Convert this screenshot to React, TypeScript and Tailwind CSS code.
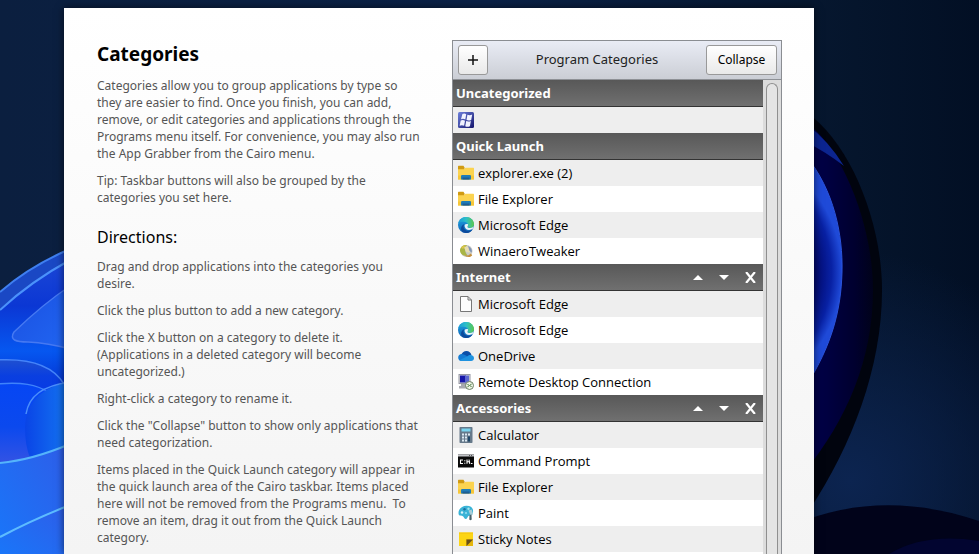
import type { ReactNode } from "react";

type IconName =
  | "windows"
  | "folder"
  | "edge"
  | "winaero"
  | "file"
  | "onedrive"
  | "remote"
  | "calculator"
  | "cmd"
  | "paint"
  | "sticky";

interface Category {
  name: string;
  editable: boolean;
  apps: { name: string; icon: IconName }[];
}

const categories: Category[] = [
  {
    name: "Uncategorized",
    editable: false,
    apps: [{ name: "", icon: "windows" }],
  },
  {
    name: "Quick Launch",
    editable: false,
    apps: [
      { name: "explorer.exe (2)", icon: "folder" },
      { name: "File Explorer", icon: "folder" },
      { name: "Microsoft Edge", icon: "edge" },
      { name: "WinaeroTweaker", icon: "winaero" },
    ],
  },
  {
    name: "Internet",
    editable: true,
    apps: [
      { name: "Microsoft Edge", icon: "file" },
      { name: "Microsoft Edge", icon: "edge" },
      { name: "OneDrive", icon: "onedrive" },
      { name: "Remote Desktop Connection", icon: "remote" },
    ],
  },
  {
    name: "Accessories",
    editable: true,
    apps: [
      { name: "Calculator", icon: "calculator" },
      { name: "Command Prompt", icon: "cmd" },
      { name: "File Explorer", icon: "folder" },
      { name: "Paint", icon: "paint" },
      { name: "Sticky Notes", icon: "sticky" },
    ],
  },
];

const intro = [
  "Categories allow you to group applications by type so\nthey are easier to find. Once you finish, you can add,\nremove, or edit categories and applications through the\nPrograms menu itself. For convenience, you may also run\nthe App Grabber from the Cairo menu.",
  "Tip: Taskbar buttons will also be grouped by the\ncategories you set here.",
];

const directions = [
  "Drag and drop applications into the categories you\ndesire.",
  "Click the plus button to add a new category.",
  "Click the X button on a category to delete it.\n(Applications in a deleted category will become\nuncategorized.)",
  "Right-click a category to rename it.",
  'Click the "Collapse" button to show only applications that\nneed categorization.',
  "Items placed in the Quick Launch category will appear in\nthe quick launch area of the Cairo taskbar. Items placed\nhere will not be removed from the Programs menu.  To\nremove an item, drag it out from the Quick Launch\ncategory.",
];

const icons: Record<IconName, ReactNode> = {
  windows: (
    <>
      <rect width="16" height="16" rx="1.5" fill="url(#winTile)" />
      <path
        d="M4.400 2Q6.400 1 8.200 2.200L7.300 7.500Q5.200 6.300 3 7.300ZM9.400 2.700Q11.800 3.700 14.200 2.600L13.200 7.900Q10.700 8.900 8.500 8ZM2.700 8.500Q5 7.500 7 8.700L6.100 13.800Q4 12.700 1.600 13.700ZM8.200 9.100Q10.400 10.100 12.900 9L11.900 14.200Q9.500 15.200 7.200 14.200Z"
        fill="#f1f3ff"
      />
    </>
  ),
  folder: (
    <>
      <path d="M0 1.300Q0 .700 .600 .700H5.500L6.500 2.600V5H0Z" fill="#d09a12" />
      <path d="M0 4.300H6.200L7.400 2.800H15.400Q16 2.800 16 3.400V14.500H0Z" fill="#fbd350" />
      <path d="M0 10.500H16V14.500H0Z" fill="#f6c638" />
      <path d="M3 14.500V11.300Q3 10 4.300 10H11.700Q13 10 13 11.300V14.500Z" fill="#1f7cb8" />
      <path d="M4.500 12.500H11.500V14.500H4.500Z" fill="#1d5c93" />
    </>
  ),
  edge: (
    <>
      <circle cx="8" cy="8" r="8" fill="url(#edgeBlue)" />
      <path
        d="M.3 6.2C1.2 2.6 4.3 0 8.2 0 12.8 0 16 3.4 16 7.2c0 2.2-1.6 3.8-3.9 3.8-1.5 0-2.6-.5-2.6-1.2 0-.5.6-.8.6-1.9C10.100 6 8.200 4.700 5.800 4.700 3.600 4.700 1.600 5.100.300 6.200Z"
        fill="url(#edgeGreen)"
      />
      <path
        d="M6.600 7C5 8.500 5.200 11.500 7.400 13 9.600 14.500 12.600 14.100 14.800 12.200 12.700 16 8.300 16.800 5 15.300 2 13.500 2.400 8.500 6.600 7Z"
        fill="#0c4a9c"
      />
      <path
        d="M6.900 7.600C7.600 7 9 6.700 10 7.300 10.300 8.700 9.400 9.200 9.500 9.900 9.600 10.700 11 11.100 12.300 11 13.700 10.900 14.900 10.200 15.600 9.200L15.300 11.300C13.200 13.400 9.700 13.500 8 11.900 6.800 10.800 6.200 8.700 6.900 7.600Z"
        fill="#e8f3f8"
      />
    </>
  ),
  winaero: (
    <>
      <circle cx="8.500" cy="8" r="6" fill="#c8c9c4" />
      <path d="M2 7C2.500 3.500 6 1.500 9 2.200 6.500 4 6 8 9.500 12.500 5 13.500 1.800 10.500 2 7Z" fill="#a9b545" />
      <path d="M6 4.500Q9 2.500 11.500 5L12.500 9Q10 10 8 8.500Z" fill="#e8ddb0" />
      <path d="M10 3Q14.500 5 13.800 9.500L11.500 8Z" fill="#8195b8" />
      <path d="M3 4.500Q5 2 8 2L5 6Z" fill="#dcc54a" />
      <path d="M6 12Q10 13.500 13 10.500L14.200 12.500 12 14Q8 14.500 6 12Z" fill="#c58f3d" />
    </>
  ),
  file: (
    <path
      d="M2.500.500H10L13.500 4V15.500H2.500ZM10 .500V4H13.500"
      fill="#fdfdfd"
      stroke="#777"
      strokeWidth="1"
    />
  ),
  onedrive: (
    <>
      <path d="M3 8C3.500 4.800 6 3 8.500 3 11 3 13 4.700 13.500 7.200L9 10Z" fill="#0b4fa8" />
      <path d="M3.600 13A3.600 3.600 0 0 1 .200 9.500C.200 7.500 1.800 6 3.700 6 5.200 6 6.500 6.800 8 7.600L13.500 13Z" fill="#147bd3" />
      <path d="M9 8.500C10 7.200 11.500 6.700 13 7 14.800 7.300 16 8.600 16 10.200 16 11.800 14.800 13 13 13H3.500Q2 13 1.300 12.200Z" fill="#1e92df" />
    </>
  ),
  remote: (
    <>
      <rect x="1" y=".500" width="11" height="9" fill="#d8d9dd" stroke="#9698a4" />
      <rect x="2" y="1.500" width="6" height="7" fill="#1616a8" />
      <path d="M7 1.500H11V8.500H7Z" fill="#5b67cf" />
      <path d="M3 10H9V12H3ZM1 12H11V14.500H1Z" fill="#a7a9b0" />
      <circle cx="11.500" cy="11.500" r="4" fill="#edf3e6" stroke="#6c8065" />
      <path d="M9.500 10L11 11.500 9.500 13.200M13.500 9.800L12 11.500 13.500 13" fill="none" stroke="#356c2c" />
    </>
  ),
  calculator: (
    <>
      <rect x="1.500" width="13" height="16" rx=".800" fill="#66798a" />
      <rect x="3.500" y="1.500" width="9" height="3" fill="#79d4ee" />
      <path
        d="M4 6.500H6V8.500H4ZM7 6.500H9V8.500H7ZM10 6.500H12V8.500H10ZM4 9.500H6V11.500H4ZM7 9.500H9V11.500H7ZM4 12.500H6V14.500H4ZM7 12.500H9V14.500H7Z"
        fill="#dceaf3"
      />
      <path d="M10 9.500H12V14.500H10Z" fill="#1e4668" />
    </>
  ),
  cmd: (
    <>
      <rect y="1.500" width="16" height="13" fill="#0a0a0a" />
      <path d="M0 1.500H16V3.500H0Z" fill="#c3c5c9" />
      <path d="M11 2H12V3H11ZM13 2H14V3H13Z" fill="#555" />
      <path
        d="M5 7H2.500V10.500H5M6.800 7.200V8.200M6.800 9.800V10.800M9 6.500V10.800M9 8.700H11M11 6.500L11.800 10.800M13 10.500H14.500"
        fill="none"
        stroke="#fff"
        strokeWidth="1.100"
      />
    </>
  ),
  paint: (
    <>
      <path
        d="M.500 8C.500 4 4 .800 8.500 .800 13 .800 15.500 3 15 7 14.600 10 12 10 10.500 11 9 12 9.500 14 7.500 14 6 14 6.200 11.500 4.500 11 2.500 10.500.500 11 .500 8Z"
        fill="#39b3d6"
      />
      <circle cx="4" cy="7.500" r="1.200" fill="#d8f3fa" />
      <circle cx="6.500" cy="4.300" r="1.200" fill="#1b6fa3" />
      <circle cx="10.500" cy="3.800" r="1.200" fill="#a3e6ef" />
      <circle cx="8" cy="8" r="1.100" fill="#8edcf0" />
      <path d="M10.500 5.500L13.700 4.500 15 9.500 12.500 10.500Z" fill="#a8ced8" />
      <path d="M11.500 10L13.500 9.500 13.700 14.500Q12.500 16 11.300 14.500Z" fill="#48616b" />
    </>
  ),
  sticky: (
    <>
      <path d="M1 1.500H15V8L8 15H1Z" fill="#fcd514" />
      <path d="M8 8H15V15H8Z" fill="#e4b50b" />
      <path d="M8.500 8.500H15L8.500 15Z" fill="#67501d" />
      <path d="M1 1.500H15V3H1Z" fill="#f7ca10" />
    </>
  ),
};

function AppIcon({ name }: { name: IconName }) {
  return (
    <svg viewBox="0 0 16 16" className="size-4 shrink-0" aria-hidden="true">
      {icons[name]}
    </svg>
  );
}

function Wallpaper() {
  return (
    <svg
      viewBox="0 0 979 554"
      preserveAspectRatio="xMidYMid slice"
      className="absolute inset-0 size-full"
      aria-hidden="true"
    >
      <defs>
        <linearGradient id="sky" x1="0" y1="0" x2="1" y2="0">
          <stop offset="0" stopColor="#0b1f3f" />
          <stop offset=".5" stopColor="#0a2147" />
          <stop offset=".83" stopColor="#06172f" />
          <stop offset="1" stopColor="#020f24" />
        </linearGradient>
        <radialGradient id="glow" cx="850" cy="480" r="230" gradientUnits="userSpaceOnUse">
          <stop offset="0" stopColor="#0c2450" />
          <stop offset="1" stopColor="#0c2450" stopOpacity="0" />
        </radialGradient>
        <linearGradient id="petalA" x1="0" y1="0" x2="0" y2="1">
          <stop offset="0" stopColor="#1f50d0" />
          <stop offset=".4" stopColor="#0a3fe0" />
          <stop offset="1" stopColor="#0638e8" />
        </linearGradient>
        <linearGradient id="petalF" x1="0" y1="260" x2="0" y2="390" gradientUnits="userSpaceOnUse">
          <stop offset="0" stopColor="#1c47d6" />
          <stop offset=".35" stopColor="#0b37d4" />
          <stop offset=".7" stopColor="#0657f0" />
          <stop offset="1" stopColor="#0430d0" />
        </linearGradient>
        <linearGradient id="petalB" x1="0" y1="0" x2="1" y2="1">
          <stop offset="0" stopColor="#1a4fe0" />
          <stop offset="1" stopColor="#2166f2" />
        </linearGradient>
        <linearGradient id="petalC" x1="0" y1="0" x2="1" y2="0">
          <stop offset="0" stopColor="#0a44e6" />
          <stop offset="1" stopColor="#1578f2" />
        </linearGradient>
        <linearGradient id="petalD" x1="0" y1="0" x2="0" y2="1">
          <stop offset="0" stopColor="#0646f4" />
          <stop offset=".5" stopColor="#0b49ee" />
          <stop offset="1" stopColor="#3b55e2" />
        </linearGradient>
        <linearGradient id="petalE" x1="0" y1="1" x2="1" y2="0">
          <stop offset="0" stopColor="#1877fa" />
          <stop offset="1" stopColor="#2f5de8" />
        </linearGradient>
        <linearGradient id="rightPetal" x1="814" y1="0" x2="883" y2="0" gradientUnits="userSpaceOnUse">
          <stop offset="0" stopColor="#00004a" />
          <stop offset=".6" stopColor="#00002e" />
          <stop offset="1" stopColor="#01030f" />
        </linearGradient>
        <radialGradient id="rightCore" cx="712" cy="272" r="130" gradientUnits="userSpaceOnUse">
          <stop offset=".78" stopColor="#02086a" />
          <stop offset=".92" stopColor="#0821a4" />
          <stop offset="1" stopColor="#1f4ad8" />
        </radialGradient>
        <linearGradient id="winTile" x1="0" y1="0" x2="1" y2="1">
          <stop offset="0" stopColor="#6d80dc" />
          <stop offset="1" stopColor="#14146c" />
        </linearGradient>
        <linearGradient id="edgeBlue" x1="0" y1="0" x2="0" y2="1">
          <stop offset="0" stopColor="#1da2e0" />
          <stop offset="1" stopColor="#1065b8" />
        </linearGradient>
        <linearGradient id="edgeGreen" x1="0" y1="0" x2="1" y2="0">
          <stop offset="0" stopColor="#199bd8" />
          <stop offset=".5" stopColor="#2dbfc8" />
          <stop offset="1" stopColor="#5cc94b" />
        </linearGradient>
      </defs>
      <rect width="979" height="554" fill="url(#sky)" />
      <rect width="979" height="554" fill="url(#glow)" />

      {/* left bloom */}
      <path d="M0 292Q30 266 70 249V554H0Z" fill="#1a48c4" />
      <path d="M0 292Q30 266 70 249" fill="none" stroke="#3f7ff0" strokeWidth="2" />
      <path d="M0 310Q30 282 70 260V554H0Z" fill="url(#petalF)" />
      <path d="M0 310Q30 282 70 260" fill="none" stroke="#4b92fb" strokeWidth="2" />
      <path
        d="M70 286Q43 304 14 332C9 340 16 342 28 342Q48 343 70 349Z"
        fill="url(#petalB)"
        stroke="#4679f2"
        strokeWidth="1.500"
      />
      <path
        d="M-4 360C28 358 52 364 64 384V400H-4Z"
        fill="url(#petalA)"
        stroke="#4584fa"
        strokeWidth="1.500"
      />
      <path
        d="M-4 384C22 382 36 384 50 393L60 470H-4Z"
        fill="url(#petalD)"
        stroke="#3f83fb"
        strokeWidth="1.500"
      />
      <path d="M70 382C42 386 25 404 25 428Q25 445 30 458H70Z" fill="url(#petalC)" />
      <path d="M70 382C42 386 29 396 26 414" fill="none" stroke="#4a8ffc" strokeWidth="1.500" />
      <path d="M0 463Q32 460 70 444V560H0Z" fill="url(#petalE)" />
      <path d="M0 463Q32 460 70 444" fill="none" stroke="#55b4fb" strokeWidth="2" />
      <path d="M0 537Q32 520 70 505V560H0Z" fill="url(#petalE)" />
      <path d="M0 537Q32 520 70 505" fill="none" stroke="#5dbcff" strokeWidth="2" />

      {/* right bloom */}
      <path d="M806 112C852 144 882 225 882 290C882 370 850 450 806 515Z" fill="#01040e" />
      <path d="M806 122C842 148 873 225 873 290C873 360 846 420 806 470Z" fill="url(#rightPetal)" />
      <path d="M806 124Q828 140 844 166Q826 152 806 142Z" fill="#0c2590" />
      <path
        d="M806 156C834 190 843 235 842 272C841 310 832 345 806 386Z"
        fill="url(#rightCore)"
        stroke="#2b54dc"
        strokeWidth="1"
      />
      <path d="M806 520C860 500 920 500 985 523V560H806Z" fill="#01031a" />
      <path d="M880 560Q920 530 985 542V560Z" fill="#020530" />
    </svg>
  );
}

function CategoryHeader({ category }: { category: Category }) {
  return (
    <div className="flex h-[27px] items-center justify-between border-b border-[#333] bg-linear-to-b from-[#585858] to-[#707070] pr-[6px] pl-[3px] text-white">
      <h3 className="pt-0.5 font-bold">{category.name}</h3>
      {category.editable && (
        <div className="flex">
          <button type="button" aria-label={`Move ${category.name} up`} className="flex h-6 w-[26px] items-center justify-center">
            <svg viewBox="0 0 10 5" className="h-[5px] w-[10px]">
              <path d="M0 5L5 0L10 5Z" fill="#fff" />
            </svg>
          </button>
          <button type="button" aria-label={`Move ${category.name} down`} className="flex h-6 w-[26px] items-center justify-center">
            <svg viewBox="0 0 10 5" className="h-[5px] w-[10px]">
              <path d="M0 0L5 5L10 0Z" fill="#fff" />
            </svg>
          </button>
          <button type="button" aria-label={`Delete ${category.name}`} className="flex h-6 w-5 items-center justify-end pt-px pr-px">
            <svg viewBox="0 0 10 10" className="size-[11px]">
              <path d="M1 0L9 10M9 0L1 10" stroke="#fff" strokeWidth="2" />
            </svg>
          </button>
        </div>
      )}
    </div>
  );
}

export default function App() {
  return (
    <div className="relative flex h-screen overflow-hidden bg-[#0a1d3c] pt-2 pr-[165px] pl-16 font-['Noto_Sans','Open_Sans',sans-serif] text-[13px] text-black">
      <Wallpaper />
      <main className="relative flex min-w-0 flex-1 items-stretch bg-linear-to-b from-white to-[#f4f4f4] pt-8 pr-8 pl-[33px] shadow-[0_0_8px_rgba(0,0,0,0.6)]">
        <section className="min-w-0 flex-1 text-[12px] leading-[17px] whitespace-pre text-[#555]">
          <h1 className="text-[19px] leading-7 font-bold text-black">Categories</h1>
          <div className="mt-[9px] flex flex-col gap-[10px]">
            {intro.map((text) => (
              <p key={text}>{text}</p>
            ))}
          </div>
          <h2 className="mt-[19px] text-[16px] leading-6 text-black">Directions:</h2>
          <div className="mt-[9px] flex flex-col gap-[10px]">
            {directions.map((text) => (
              <p key={text}>{text}</p>
            ))}
          </div>
        </section>

        <section className="flex w-[330px] shrink-0 flex-col border border-b-0 border-[#8a8d92]">
          <div className="flex h-[39px] shrink-0 items-center justify-between border-b border-[#8e9196] bg-linear-to-b from-[#e9ecf5] to-[#cbced5] pr-1 pl-[5px]">
            <button
              type="button"
              aria-label="Add category"
              className="flex size-[30px] items-center justify-center rounded-[3px] border border-[#999] bg-linear-to-b from-white to-[#e9e9e9]"
            >
              <svg viewBox="0 0 12 12" className="size-3">
                <path d="M6 1V11M1 6H11" stroke="#111" strokeWidth="1.500" />
              </svg>
            </button>
            <h2 className="flex-1 text-center text-[#222]">Program Categories</h2>
            <button
              type="button"
              className="h-[30px] w-[71px] rounded-[3px] border border-[#999] bg-linear-to-b from-white to-[#e9e9e9] text-[12px]"
            >
              Collapse
            </button>
          </div>

          <div className="flex min-h-0 flex-1">
            <div className="min-w-0 flex-1 overflow-hidden bg-white">
              {categories.map((category) => (
                <section key={category.name}>
                  <CategoryHeader category={category} />
                  <ul className="font-['Open_Sans','Noto_Sans',sans-serif]">
                    {category.apps.map((app, i) => (
                      <li
                        key={i}
                        className="flex h-[26px] items-center gap-1 bg-white pl-[5px] odd:bg-[#eee]"
                      >
                        <AppIcon name={app.icon} />
                        <span className="pt-0.5">{app.name}</span>
                      </li>
                    ))}
                  </ul>
                </section>
              ))}
            </div>
            <div className="flex w-[18px] shrink-0 bg-[#dcdcdc] pt-[3px] pr-[3px] pl-[3px]">
              <div className="flex-1 rounded-t-[6px] border border-b-0 border-[#8f8f8f] bg-[#e4e4e4]" />
            </div>
          </div>
        </section>
      </main>
    </div>
  );
}
